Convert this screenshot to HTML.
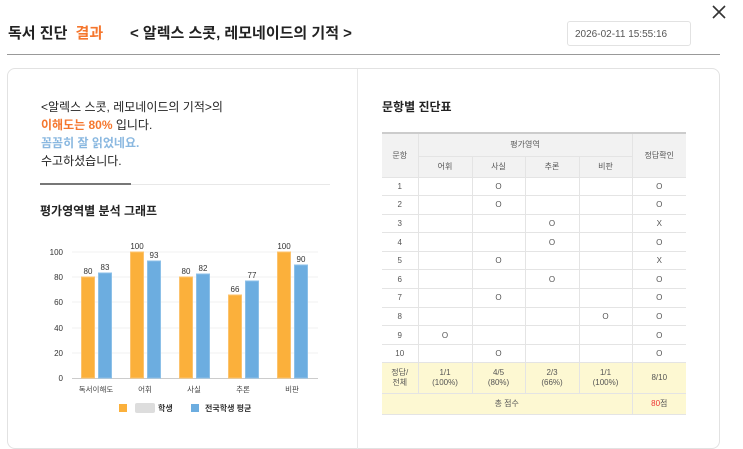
<!DOCTYPE html>
<html><head><meta charset="utf-8"><style>
*{margin:0;padding:0;box-sizing:border-box}
body{width:743px;height:449px;background:#fff;font-family:"Liberation Sans","Noto Sans CJK KR",sans-serif;position:relative;overflow:hidden;color:#222}
.abs{position:absolute}
table{border-collapse:collapse;position:absolute;left:382px;top:132px;width:304px;font-size:8px;color:#555;table-layout:fixed}
td,th{text-align:center;border:1px solid #e4e4e4;border-left:1px solid #e4e4e4;font-weight:normal;padding:0}
tr td:first-child,tr th:first-child{border-left:none}
tr td:last-child,tr th:last-child{border-right:none}
th{background:#f2f2f2;color:#555}
td{height:18.6px}
.y td{background:#fdf8d2;line-height:10px}
</style></head><body>
<div class="abs" style="left:8px;top:22px;font-size:15px;font-weight:bold;color:#222">독서 진단 <span style="color:#f5772e;margin-left:4px">결과</span></div>
<div class="abs" style="left:130px;top:22px;font-size:15px;font-weight:bold;color:#222">&lt; 알렉스 스콧, 레모네이드의 기적 &gt;</div>
<div class="abs" style="left:567px;top:21px;width:124px;height:25px;border:1px solid #e2e2e2;border-radius:3px;font-size:10px;color:#555;padding:7px 0 0 7px">2026-02-11 15:55:16</div>
<svg class="abs" style="left:712px;top:5px" width="14" height="14"><path d="M1 1L13 13M13 1L1 13" stroke="#333" stroke-width="1.6"/></svg>
<div class="abs" style="left:7px;top:54px;width:713px;height:1px;background:#999"></div>
<div class="abs" style="left:7px;top:68px;width:713px;height:381px;border:1px solid #e2e2e2;border-radius:8px"></div>
<div class="abs" style="left:357px;top:69px;width:1px;height:380px;background:#e8e8e8"></div>
<div class="abs" style="left:41px;top:98px;font-size:12px;line-height:18px;color:#222">&lt;알렉스 스콧, 레모네이드의 기적&gt;의<br><span style="color:#f5772e;font-weight:bold">이해도는 80%</span> 입니다.<br><span style="color:#8ab8e0;font-weight:bold">꼼꼼히 잘 읽었네요.</span><br>수고하셨습니다.</div>
<div class="abs" style="left:40px;top:184px;width:290px;height:1px;background:#e8e8e8"></div>
<div class="abs" style="left:40px;top:183px;width:91px;height:2px;background:#777"></div>
<div class="abs" style="left:40px;top:202px;font-size:12px;font-weight:bold">평가영역별 분석 그래프</div>
<svg class="abs" style="left:0;top:0" width="357" height="449" font-family="Liberation Sans,Noto Sans CJK KR,sans-serif" font-size="8">
<g stroke="#f0f0f0"><line x1="72" y1="252" x2="318" y2="252"/><line x1="72" y1="277" x2="318" y2="277"/><line x1="72" y1="302" x2="318" y2="302"/><line x1="72" y1="328" x2="318" y2="328"/><line x1="72" y1="353" x2="318" y2="353"/></g>
<line x1="72" y1="378.5" x2="318" y2="378.5" stroke="#ccc"/>
<g fill="#333" text-anchor="end"><text x="63" y="255">100</text><text x="63" y="280">80</text><text x="63" y="305">60</text><text x="63" y="331">40</text><text x="63" y="356">20</text><text x="63" y="381">0</text></g>
<g fill="#fbb03b" stroke="#fcc36e"><rect x="81.5" y="277" width="13" height="101"/><rect x="130.5" y="252" width="13" height="126"/><rect x="179.5" y="277" width="13" height="101"/><rect x="228.5" y="295" width="13" height="83"/><rect x="277.5" y="252" width="13" height="126"/></g>
<g fill="#6cade0" stroke="#8cc0e8"><rect x="98.5" y="273" width="13" height="105"/><rect x="147.5" y="261" width="13" height="117"/><rect x="196.5" y="274" width="13" height="104"/><rect x="245.5" y="281" width="13" height="97"/><rect x="294.5" y="265" width="13" height="113"/></g>
<g fill="#333" text-anchor="middle"><text x="88" y="274">80</text><text x="105" y="270">83</text><text x="137" y="249">100</text><text x="154" y="258">93</text><text x="186" y="274">80</text><text x="203" y="271">82</text><text x="235" y="292">66</text><text x="252" y="278">77</text><text x="284" y="249">100</text><text x="301" y="262">90</text></g>
<g fill="#444" text-anchor="middle" font-size="7.5"><text x="96" y="392">독서이해도</text><text x="145" y="392">어휘</text><text x="194" y="392">사실</text><text x="243" y="392">추론</text><text x="292" y="392">비판</text></g>
<rect x="119" y="404" width="8" height="8" fill="#fbb03b"/><rect x="135" y="403" width="20" height="10" fill="#ddd" rx="2"/>
<text x="158" y="411" fill="#333" font-size="8" font-weight="bold">학생</text>
<rect x="191" y="404" width="8" height="8" fill="#6cade0"/>
<text x="205" y="411" fill="#333" font-size="8" font-weight="bold">전국학생 평균</text>
</svg>
<div class="abs" style="left:382px;top:98px;font-size:12px;font-weight:bold">문항별 진단표</div>
<table>
<colgroup><col style="width:36px"><col style="width:54px"><col style="width:53px"><col style="width:54px"><col style="width:53px"><col style="width:54px"></colgroup>
<tr style="height:23px"><th rowspan="2" style="border-top:2px solid #ccc">문항</th><th colspan="4" style="border-top:2px solid #ccc">평가영역</th><th rowspan="2" style="border-top:2px solid #ccc">정답확인</th></tr>
<tr style="height:21px"><th>어휘</th><th>사실</th><th>추론</th><th>비판</th></tr>
<tr><td>1</td><td></td><td>O</td><td></td><td></td><td>O</td></tr>
<tr><td>2</td><td></td><td>O</td><td></td><td></td><td>O</td></tr>
<tr><td>3</td><td></td><td></td><td>O</td><td></td><td>X</td></tr>
<tr><td>4</td><td></td><td></td><td>O</td><td></td><td>O</td></tr>
<tr><td>5</td><td></td><td>O</td><td></td><td></td><td>X</td></tr>
<tr><td>6</td><td></td><td></td><td>O</td><td></td><td>O</td></tr>
<tr><td>7</td><td></td><td>O</td><td></td><td></td><td>O</td></tr>
<tr><td>8</td><td></td><td></td><td></td><td>O</td><td>O</td></tr>
<tr><td>9</td><td>O</td><td></td><td></td><td></td><td>O</td></tr>
<tr><td>10</td><td></td><td>O</td><td></td><td></td><td>O</td></tr>
<tr class="y" style="height:31px"><td>정답/<br>전체</td><td>1/1<br>(100%)</td><td>4/5<br>(80%)</td><td>2/3<br>(66%)</td><td>1/1<br>(100%)</td><td>8/10</td></tr>
<tr class="y" style="height:21px"><td colspan="5">총 점수</td><td><span style="color:#e33">80</span>점</td></tr>
</table>
</body></html>
